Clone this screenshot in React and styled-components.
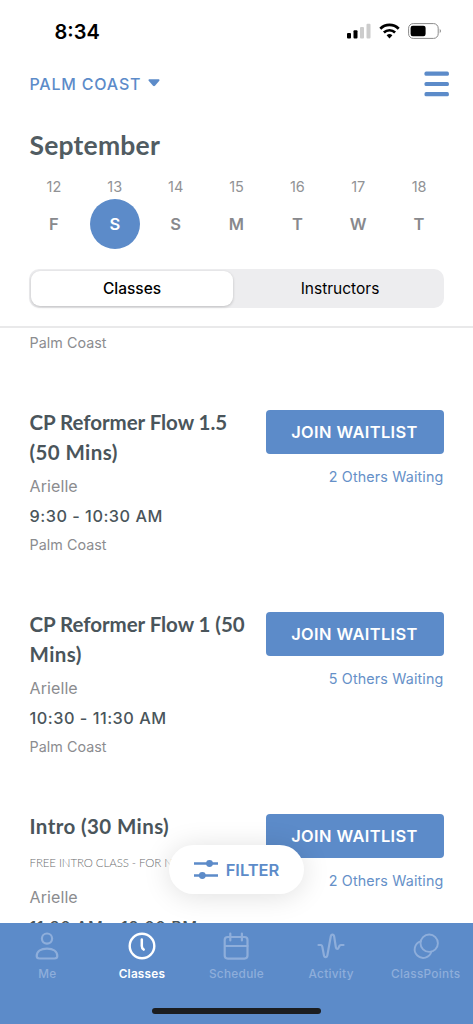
import { useState } from "react";
import styled, { createGlobalStyle } from "styled-components";

const BLUE = "#5c8bc9";

const GlobalStyle = createGlobalStyle`
  * {
    box-sizing: border-box;
  }

  body {
    margin: 0;
    background: white;
    font-family: Inter, "Liberation Sans", sans-serif;
  }

  button {
    border: none;
    padding: 0;
    font-family: inherit;
    background: none;
  }
`;

const Screen = styled.div`
  width: 473px;
  height: 1024px;
  display: flex;
  flex-direction: column;
  overflow: hidden;
  background: white;
`;

const Header = styled.header`
  flex: none;
  height: 328px;
  border-bottom: 2px solid #e9e9ea;
`;

const StatusBar = styled.div`
  height: 62px;
  padding: 0 31px 0 54.5px;
  display: flex;
  align-items: center;
  justify-content: space-between;
`;

const Clock = styled.span`
  margin-top: 1px;
  font-size: 20px;
  font-weight: 600;
  letter-spacing: 0;
  color: black;
`;

const StatusIcons = styled.div`
  display: flex;
  align-items: center;
  gap: 8px;
`;

const TopRow = styled.div`
  height: 43px;
  padding: 0 24px 0 29.5px;
  display: flex;
  align-items: center;
  justify-content: space-between;
`;

const Location = styled.button`
  display: flex;
  align-items: center;
  gap: 7px;
  font-size: 16px;
  font-weight: 500;
  letter-spacing: 0.8px;
  color: ${BLUE};
`;

const MenuButton = styled.button`
  display: flex;
`;

const Month = styled.h1`
  margin: 22px 0 0 29.5px;
  font-family: Lato, sans-serif;
  font-size: 26.5px;
  font-weight: 700;
  line-height: 36px;
  letter-spacing: 0.2px;
  color: #515c62;
`;

const Days = styled.div`
  margin-top: 14px;
  padding: 0 23.5px;
  display: grid;
  grid-template-columns: repeat(7, 1fr);
`;

const Day = styled.div`
  display: flex;
  flex-direction: column;
  align-items: center;
`;

const DayNumber = styled.span`
  height: 22px;
  font-size: 14.5px;
  line-height: 20px;
  color: #919295;
`;

const DayLetter = styled.span`
  width: 50px;
  height: 50px;
  border-radius: 50%;
  font-size: 16.5px;
  font-weight: 600;
  line-height: 50px;
  text-align: center;
  color: ${({ $active }) => ($active ? "white" : "#88898d")};
  background: ${({ $active }) => ($active ? BLUE : "transparent")};
`;

const Segments = styled.div`
  margin: 20px 29px 0;
  height: 39px;
  padding: 2px;
  border-radius: 10px;
  display: grid;
  grid-template-columns: 202px 1fr;
  column-gap: 5px;
  background: #ededef;
`;

const Segment = styled.button`
  border-radius: 9px;
  font-size: 15.5px;
  font-weight: ${({ $active }) => ($active ? 500 : 400)};
  color: black;
  background: ${({ $active }) => ($active ? "white" : "transparent")};
  box-shadow: ${({ $active }) =>
    $active ? "0 1px 3px rgba(0, 0, 0, 0.2)" : "none"};
`;

const List = styled.main`
  position: relative;
  flex: 1;
  min-height: 0;
  overflow: hidden;
  padding: 5px 29.5px 0;
`;

const ClassItem = styled.article`
  margin-top: 55px;
  height: 147px;
  display: flex;
  justify-content: space-between;
`;

const Info = styled.div`
  width: 228px;
`;

const Title = styled.h2`
  margin: 0 0 5px;
  font-family: Lato, sans-serif;
  font-size: 20.5px;
  font-weight: 700;
  line-height: 29.5px;
  letter-spacing: 0.4px;
  color: #4a555b;

  &::first-line {
    letter-spacing: ${({ $long }) => ($long ? "-0.05px" : "0.4px")};
  }
`;

const Description = styled.p`
  margin: 6px 0 11px;
  padding-top: 6px;
  font-family: Lato, sans-serif;
  font-size: 11.5px;
  font-weight: 300;
  line-height: 18px;
  letter-spacing: -0.1px;
  white-space: nowrap;
  color: #6b6c70;
`;

const Instructor = styled.div`
  font-size: 16px;
  line-height: 28px;
  letter-spacing: 0.1px;
  color: #8b8c8f;
`;

const Time = styled.div`
  font-size: 16.3px;
  font-weight: 500;
  line-height: 32px;
  letter-spacing: 0.5px;
  white-space: nowrap;
  color: #4a555b;
`;

const Studio = styled.div`
  font-size: 14.3px;
  line-height: 20px;
  letter-spacing: 0.05px;
  color: #8b8c8f;

  ${Time} + & {
    margin-top: 3px;
  }
`;

const Action = styled.div`
  width: 178px;
  padding-top: 2px;
`;

const WaitlistButton = styled.button`
  width: 100%;
  height: 44px;
  border-radius: 4px;
  font-size: 16.4px;
  font-weight: 600;
  letter-spacing: 0.4px;
  color: white;
  background: ${BLUE};
`;

const Waiting = styled.div`
  margin-top: 13px;
  font-size: 14.3px;
  line-height: 20px;
  letter-spacing: 0.15px;
  text-align: right;
  white-space: nowrap;
  color: #6590c8;
`;

// Floats over the scrolled list
const FilterButton = styled.button`
  position: absolute;
  left: 169px;
  bottom: 29px;
  width: 135px;
  height: 49px;
  border-radius: 25px;
  display: flex;
  align-items: center;
  justify-content: center;
  gap: 8px;
  font-size: 16.5px;
  font-weight: 600;
  color: ${BLUE};
  background: white;
  box-shadow: 0 2px 28px rgba(0, 0, 0, 0.13);
`;

const Footer = styled.footer`
  flex: none;
  height: 101px;
  display: flex;
  flex-direction: column;
  align-items: center;
  background: ${BLUE};
`;

const Tabs = styled.nav`
  width: 100%;
  height: 85px;
  display: grid;
  grid-template-columns: repeat(5, 1fr);
`;

const Tab = styled.button`
  padding-top: 8px;
  display: flex;
  flex-direction: column;
  align-items: center;
  gap: 5px;
  font-size: 11.8px;
  font-weight: ${({ $active }) => ($active ? 600 : 500)};
  line-height: 16px;
  letter-spacing: ${({ $active }) => ($active ? "0.2px" : "0.3px")};
  color: ${({ $active }) => ($active ? "white" : "#8eaedb")};
`;

const HomeIndicator = styled.div`
  width: 169px;
  height: 6px;
  border-radius: 3px;
  background: #1b1d20;
`;

const Signal = () => (
  <svg width="24" height="16" viewBox="0 0 24 16">
    <rect x="0" y="10" width="4" height="5.5" rx="1" fill="black" />
    <rect x="6.5" y="7.2" width="4" height="8.3" rx="1" fill="black" />
    <rect x="13" y="4" width="4" height="11.5" rx="1" fill="#ccc" />
    <rect x="19.5" y="0.7" width="4" height="14.8" rx="1" fill="#ccc" />
  </svg>
);

const Wifi = () => (
  <svg width="21" height="16" viewBox="0 0 21 16" fill="none" stroke="black">
    <path d="M1.3 5.7a13.2 13.2 0 0 1 18.4 0" strokeWidth="2.7" />
    <path d="M4.9 9.5a8 8 0 0 1 11.2 0" strokeWidth="2.6" />
    <path
      d="M7.6 12.3a4.3 4.3 0 0 1 5.8 0L10.5 15.4z"
      fill="black"
      stroke="none"
    />
  </svg>
);

const Battery = () => (
  <svg width="34" height="16" viewBox="0 0 34 16">
    <rect
      x="0.6"
      y="0.6"
      width="29.6"
      height="14.8"
      rx="4.6"
      fill="none"
      stroke="#8a8a8a"
    />
    <rect x="2.6" y="2.8" width="15" height="10.4" rx="2.2" fill="black" />
    <path d="M31.8 5.6q1.8 2.4 0 4.8z" fill="#555" />
  </svg>
);

const Caret = () => (
  <svg width="12" height="10" viewBox="0 0 12 10">
    <path
      d="M1 0.3h10q1 .5.3 1.5L7 6.7q-1 .9-2 0L.7 1.8Q0 .8 1 .3z"
      fill="currentColor"
    />
  </svg>
);

const Menu = () => (
  <svg width="25" height="26" viewBox="0 0 25 26" fill={BLUE}>
    <rect x="0.5" y="0.6" width="24.4" height="4.2" rx="1.6" />
    <rect x="0.5" y="10.9" width="24.4" height="4.2" rx="1.6" />
    <rect x="0.5" y="21.1" width="24.4" height="4.2" rx="1.6" />
  </svg>
);

const Sliders = () => (
  <svg width="24" height="20" viewBox="0 0 24 20">
    <path d="M0 3.5h24M0 15.500h24" stroke="currentColor" strokeWidth="2.4" />
    <circle cx="15.5" cy="3.500" r="3.4" fill="currentColor" />
    <circle cx="8.3" cy="15.500" r="3.4" fill="currentColor" />
  </svg>
);

const TabIcon = ({ children }) => (
  <svg
    width="30"
    height="30"
    viewBox="0 0 30 30"
    fill="none"
    stroke="currentColor"
    strokeWidth="2.2"
    strokeLinecap="round"
    strokeLinejoin="round"
  >
    {children}
  </svg>
);

const TABS = [
  {
    name: "Me",
    icon: (
      <>
        <circle cx="15" cy="7.6" r="5.1" />
        <path d="M7.5 27.5c-2 0-2.8-.8-2.8-2.4 0-4.4 4-7.4 10.3-7.4s10.3 3 10.3 7.4c0 1.6-.8 2.4-2.8 2.4z" />
      </>
    ),
  },
  {
    name: "Classes",
    icon: (
      <>
        <circle cx="15" cy="15" r="12.3" strokeWidth="2.4" />
        <path d="M14.8 8.5v6.5q0 2.2 1.9 3.6" strokeWidth="2.5" />
      </>
    ),
  },
  {
    name: "Schedule",
    icon: (
      <>
        <rect x="3.7" y="6" width="22.8" height="21.6" rx="3" />
        <path d="M4 15h22.5M9.3 2.5v7M20.9 2.5v7" />
      </>
    ),
  },
  {
    name: "Activity",
    icon: (
      <path d="M2.5 14h2.2c1.3 0 1.5 1 1.7 2.1l1.5 8c.5 2.8 3 2.8 3.5 0L14.7 5.7c.5-2.8 3-2.8 3.5 0l1.6 10.5c.4 2.3 2.3 2.3 2.9.3.5-1.6.9-2.5 2.3-2.5h2.5" />
    ),
  },
  {
    name: "ClassPoints",
    icon: (
      <g strokeWidth="1.9">
        <circle cx="18.2" cy="12.2" r="8.7" />
        <path d="M9.6 10.3a8.5 8.5 0 1 0 10.8 10.3" />
      </g>
    ),
  },
];

const DAYS = [
  { number: 12, letter: "F" },
  { number: 13, letter: "S" },
  { number: 14, letter: "S" },
  { number: 15, letter: "M" },
  { number: 16, letter: "T" },
  { number: 17, letter: "W" },
  { number: 18, letter: "T" },
];

const CLASSES = [
  {
    title: "CP Reformer Flow 1.5 (50 Mins)",
    time: "9:30 - 10:30 AM",
    waiting: 2,
  },
  {
    title: "CP Reformer Flow 1 (50 Mins)",
    time: "10:30 - 11:30 AM",
    waiting: 5,
  },
  {
    title: "Intro (30 Mins)",
    description: "FREE INTRO CLASS - FOR N",
    time: "11:30 AM - 12:00 PM",
    waiting: 2,
  },
];

const App = () => {
  const [day, setDay] = useState(13);
  const [segment, setSegment] = useState("Classes");
  const [tab, setTab] = useState("Classes");

  return (
    <Screen>
      <GlobalStyle />
      <Header>
        <StatusBar>
          <Clock>8:34</Clock>
          <StatusIcons>
            <Signal />
            <Wifi />
            <Battery />
          </StatusIcons>
        </StatusBar>
        <TopRow>
          <Location>
            PALM COAST <Caret />
          </Location>
          <MenuButton aria-label="Menu">
            <Menu />
          </MenuButton>
        </TopRow>
        <Month>September</Month>
        <Days>
          {DAYS.map(({ number, letter }) => (
            <Day key={number} onClick={() => setDay(number)}>
              <DayNumber>{number}</DayNumber>
              <DayLetter $active={day === number}>{letter}</DayLetter>
            </Day>
          ))}
        </Days>
        <Segments>
          {["Classes", "Instructors"].map((name) => (
            <Segment
              key={name}
              $active={segment === name}
              onClick={() => setSegment(name)}
            >
              {name}
            </Segment>
          ))}
        </Segments>
      </Header>

      <List>
        <Studio>Palm Coast</Studio>
        {CLASSES.map((item) => (
          <ClassItem key={item.time}>
            <Info>
              <Title $long={item.title.length > 20}>{item.title}</Title>
              {item.description && (
                <Description>{item.description}</Description>
              )}
              <Instructor>Arielle</Instructor>
              <Time>{item.time}</Time>
              <Studio>Palm Coast</Studio>
            </Info>
            <Action>
              <WaitlistButton>JOIN WAITLIST</WaitlistButton>
              <Waiting>{item.waiting} Others Waiting</Waiting>
            </Action>
          </ClassItem>
        ))}
        <FilterButton>
          <Sliders /> FILTER
        </FilterButton>
      </List>

      <Footer>
        <Tabs>
          {TABS.map(({ name, icon }) => (
            <Tab key={name} $active={tab === name} onClick={() => setTab(name)}>
              <TabIcon>{icon}</TabIcon>
              {name}
            </Tab>
          ))}
        </Tabs>
        <HomeIndicator />
      </Footer>
    </Screen>
  );
};

export default App;
